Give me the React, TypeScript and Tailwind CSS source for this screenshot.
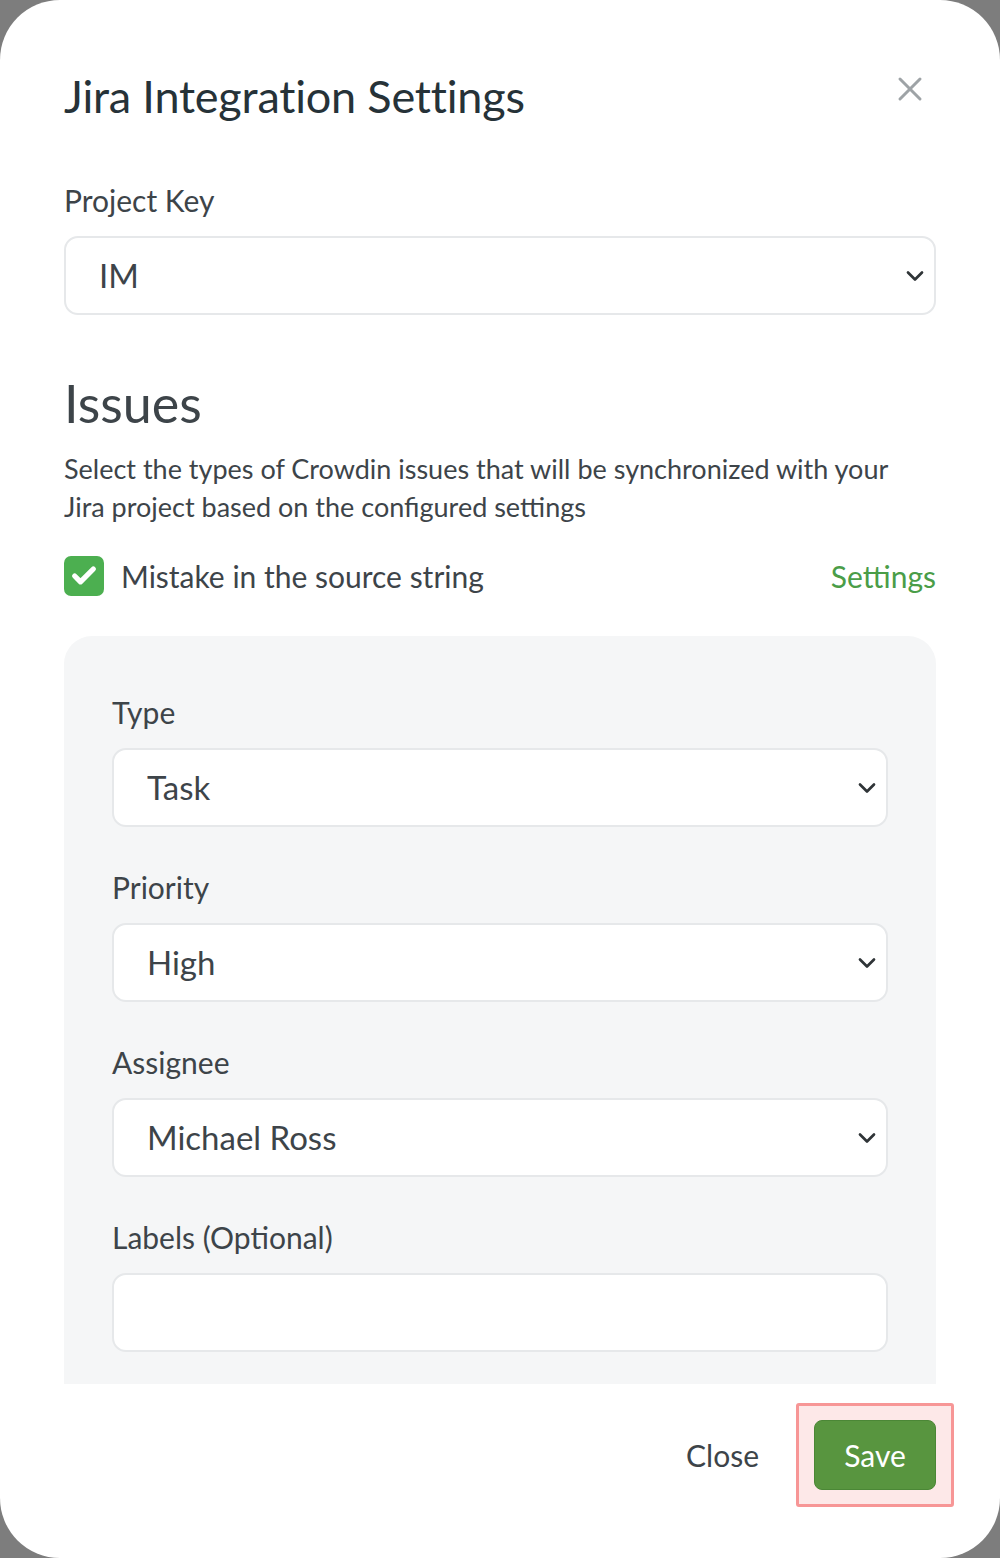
import { Check, ChevronDown, X } from "lucide-react"

const font = { fontFamily: "Lato, 'Noto Sans', sans-serif" }

function SelectBox({ value }: { value: string }) {
  return (
    <div className="flex h-[79px] items-center justify-between rounded-[14px] border-2 border-[#e6e8ea] bg-white pr-[5px] pl-[33px]">
      <span className="text-[33px] text-[#3d4449]">{value}</span>
      <ChevronDown className="size-[28px] text-[#2f3437]" strokeWidth={2.3} />
    </div>
  )
}

function Field({ label, children }: { label: string; children: React.ReactNode }) {
  return (
    <div className="flex flex-col gap-[18px]">
      <div className="text-[30px] leading-[36px] text-[#3d4449]">{label}</div>
      {children}
    </div>
  )
}

export default function App() {
  return (
    <div className="h-[1558px] w-[1000px] bg-[#7d7d7d]" style={font}>
      <div className="flex h-full flex-col overflow-hidden rounded-[60px] bg-white px-[64px]">
        <div className="mt-[70px] flex h-[52px] items-start justify-between">
          <h1 className="text-[45px] leading-[52px] tracking-[-0.2px] text-[#263238]">
            Jira Integration Settings
          </h1>
          <X className="mt-[-1px] mr-[6px] size-[40px] text-[#9ea3a6]" strokeWidth={1.8} />
        </div>

        <div className="mt-[60px]">
          <Field label="Project Key">
            <SelectBox value="IM" />
          </Field>
        </div>

        <h2 className="mt-[58px] text-[52px] leading-[60px] text-[#3d4449]">Issues</h2>
        <p className="mt-[17px] text-[27px] leading-[38px] text-[#3d4449]">
          Select the types of Crowdin issues that will be synchronized with your
          <br />
          Jira project based on the configured settings
        </p>

        <div className="mt-[30px] flex h-[40px] items-center justify-between">
          <div className="flex items-center gap-[17px]">
            <span className="flex size-[40px] items-center justify-center rounded-[7px] bg-[#4caf50]">
              <Check className="size-[28px] text-white" strokeWidth={4.5} />
            </span>
            <span className="text-[30px] text-[#3d4449]">Mistake in the source string</span>
          </div>
          <a className="text-[30px] text-[#4a9d48]">Settings</a>
        </div>

        <div className="mt-[40px] flex flex-col gap-[42px] rounded-t-[28px] bg-[#f5f6f7] px-[48px] pt-[58px] pb-[32px]">
          <Field label="Type">
            <SelectBox value="Task" />
          </Field>
          <Field label="Priority">
            <SelectBox value="High" />
          </Field>
          <Field label="Assignee">
            <SelectBox value="Michael Ross" />
          </Field>
          <Field label="Labels (Optional)">
            <div className="h-[79px] rounded-[14px] border-2 border-[#e6e8ea] bg-white" />
          </Field>
        </div>

        <div className="mt-[36px] flex items-center justify-end gap-[55px]">
          <button className="text-[30px] text-[#3d4449]">Close</button>
          <div className="relative">
            <span className="absolute -inset-x-[18px] -inset-y-[17px] rounded-[3px] border-[3px] border-[#f79696] bg-[#fde8e8]" />
            <button className="relative flex h-[70px] w-[122px] items-center justify-center rounded-[8px] border border-[#4b8736] bg-[#58953f] text-[30px] text-white">
              Save
            </button>
          </div>
        </div>
      </div>
    </div>
  )
}
